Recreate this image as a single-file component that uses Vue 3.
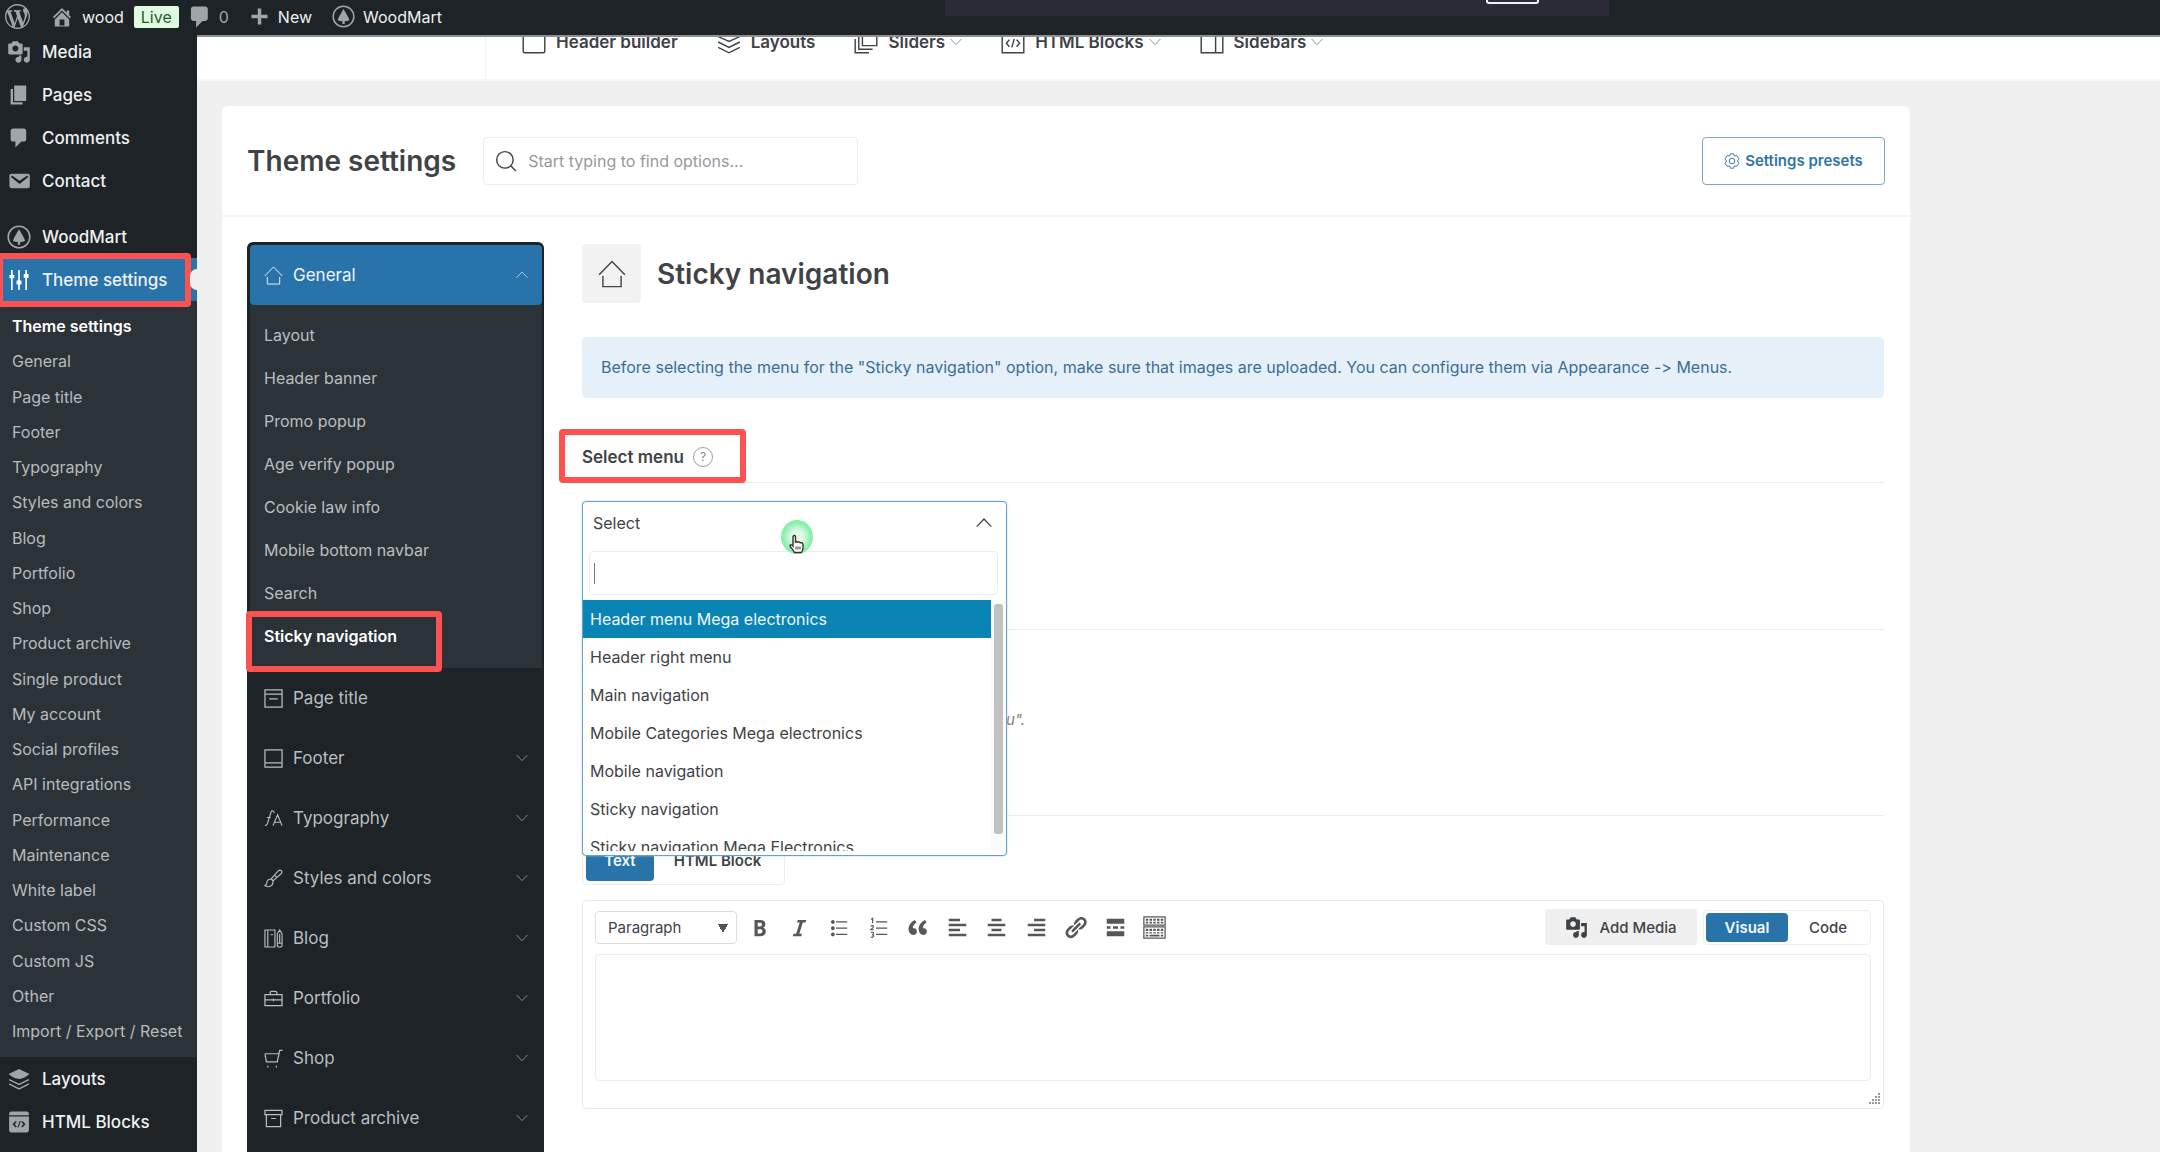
<script setup>
import { h, ref } from 'vue'

const glyphs = {
  wordpress: { d: 'M20 10c0-5.51-4.49-10-10-10C4.48 0 0 4.49 0 10c0 5.52 4.48 10 10 10 5.51 0 10-4.48 10-10zM7.78 15.37L4.37 6.22c.55-.02 1.17-.08 1.17-.08.5-.06.44-1.13-.06-1.11 0 0-1.45.11-2.37.11-.18 0-.37 0-.58-.01C4.12 2.69 6.87 1.11 10 1.11c2.33 0 4.45.87 6.05 2.34-.68-.11-1.65.39-1.65 1.58 0 .74.45 1.36.9 2.1.35.61.55 1.36.55 2.46 0 1.49-1.4 5-1.4 5l-3.03-8.37c.54-.02.82-.17.82-.17.5-.05.44-1.25-.06-1.22 0 0-1.44.12-2.38.12-.87 0-2.33-.12-2.33-.12-.5-.03-.56 1.2-.06 1.22l.92.08 1.26 3.41zM17.41 10c.24-.64.74-1.87.43-4.25.7 1.29 1.05 2.71 1.05 4.25 0 3.29-1.73 6.24-4.4 7.78.97-2.59 1.94-5.2 2.92-7.78zM6.1 18.09C3.12 16.65 1.11 13.53 1.11 10c0-1.3.23-2.48.72-3.59C3.25 10.3 4.67 14.2 6.1 18.09zm4.03-6.63l2.58 6.98c-.86.29-1.76.45-2.71.45-.79 0-1.57-.11-2.29-.33.81-2.38 1.62-4.74 2.42-7.1z' },
  site: { d: 'M16 8.5l1.53 1.53-1.06 1.06L10 4.6l-6.47 6.49-1.06-1.06L10 2.5l4 4v-2h2v4zm-6-2.46l6 5.99V18H4v-5.97zM12 17v-5H8v5h4z' },
  comment: { d: 'M5 2h9c1.1 0 2 .9 2 2v7c0 1.1-.9 2-2 2h-2l-5 5v-5H5c-1.1 0-2-.9-2-2V4c0-1.1.9-2 2-2z' },
  plus: { d: 'M17 8.5v3h-5.5V17h-3v-5.5H3v-3h5.500V3h3v5.500z' },
  media: { d: 'M13 11V4c0-.55-.45-1-1-1h-1.67L9 1H5L3.67 3H2c-.55 0-1 .45-1 1v7c0 .55.45 1 1 1h10c.55 0 1-.45 1-1zM7 4.500c1.380 0 2.500 1.120 2.500 2.500S8.380 9.500 7 9.500 4.500 8.380 4.500 7 5.620 4.500 7 4.500zM14 6h5v10.500c0 1.380-1.120 2.500-2.500 2.500S14 17.880 14 16.500s1.120-2.500 2.500-2.500c.17 0 .34.02.5.05V9h-3V6zm-4 8.050V13h2v3.500c0 1.380-1.120 2.500-2.500 2.500S7 17.880 7 16.500 8.120 14 9.500 14c.17 0 .34.02.5.05z' },
  page: { d: 'M6 15V2h10v13H6zm-1 1h8v2H3V5h2v11z' },
  mail: { d: 'M3.870 4h13.250C18.370 4 19 4.590 19 5.790v8.420c0 1.190-.63 1.790-1.880 1.790H3.870c-1.250 0-1.880-.6-1.880-1.790V5.790c0-1.200.63-1.790 1.880-1.790zm6.620 8.600l6.740-5.530c.24-.2.43-.66.13-1.070-.29-.41-.82-.42-1.170-.17l-5.700 3.860L4.800 5.830c-.35-.25-.88-.24-1.170.17-.3.41-.11.87.13 1.070z' },
  wood: { s: 1.3, d: 'M10 1a9 9 0 1 0 0 18a9 9 0 1 0 0-18', f: 'M10 3.500L13.500 9.500Q15 12 15 13.300Q12.500 14.300 11 14V16.500H9V14Q7.500 14.300 5 13.300Q5 12 6.500 9.500Z' },
  sliders: { s: 1.500, d: 'M3.500 1V19M10 1V19M16.500 1V19', f: 'M1.300 5.500h4.400v3h-4.400zM7.800 10.500h4.400v3.500h-4.400zM14.300 4.500h4.400v3.500h-4.400z' },
  layersFill: { s: 1.300, d: 'M1 10.500L10 15L19 10.500M1 14.500L10 19L19 14.500', f: 'M10 1L19.500 5.500Q15 9.500 10 10Q5 9.500 .5 5.500Z' },
  htmlFill: { f: 'M1 3Q1 0.500 3 .5H17Q19 .5 19 3V3.800H1ZM1 5H19V17Q19 19.500 17 19.500H3Q1 19.500 1 17ZM7 9L4 12L7 15L8 14L6 12L8 10ZM13 9L12 10L14 12L12 14L13 15L16 12ZM10.600 9L8.600 15H9.600L11.600 9Z' },
  home: { s: 1, d: 'M.8 10.500L10 1L19.200 10.500M3.500 11.500V19H16.500V11.500' },
  window: { s: 1.200, d: 'M2.500 1H17.500Q19 1 19 2.500V17.500Q19 19 17.500 19H2.500Q1 19 1 17.500V2.500Q1 1 2.500 1ZM1 5H19' },
  layers: { s: 1.200, d: 'M10 1L19 5.500L10 9.500L1 5.500ZM1 10L10 14.500L19 10M1 14.500L10 19L19 14.500' },
  slides: { s: 1.200, d: 'M7 1H19V13H7ZM4 4.500V16H15.500M1 7.500V19H12.500' },
  html: { s: 1.200, d: 'M1 1H19V19H1ZM1 4H19M7 8L4.500 11L7 14M13 8L15.500 11L13 14M11 7.500L9 14.500' },
  sidebar: { s: 1.200, d: 'M1 1H19V19H1ZM13 1V19' },
  search: { s: 1.300, d: 'M9 1.500a7.500 7.500 0 1 0 0 15a7.500 7.500 0 1 0 0-15M14.500 14.500L19 19' },
  gear: { s: 1.200, d: 'M8 1H12L13 3.800L16 3.300L18.500 7L17 10L18.500 13L16 16.700L13 16.200L12 19H8L7 16.200L4 16.700L1.500 13L3 10L1.500 7L4 3.300L7 3.800ZM10 6.500a3.500 3.500 0 1 0 0 7a3.500 3.500 0 1 0 0-7' },
  titlebar: { s: 1.300, d: 'M1 1H19V19H1ZM1 5.500H19M5.500 10.500H14.500' },
  footer: { s: 1.300, d: 'M1 1H19V19H1ZM1 14.500H19' },
  typo: { s: 1.200, d: 'M1 17Q3 18 4 14L7.500 3Q8 1.500 9.500 2L11 4M3 9H7M9.500 17.500L14.300 6L19 17.500M11 14H17.500' },
  brush: { s: 1.200, d: 'M7.500 10.500L15 2Q17 .5 18.500 2Q19.500 3.500 18 5L9.500 12.500M7.500 10.500Q9.500 11 9.500 13Q10 16 7 18Q4 19.500 1 17.500Q3 16.500 3 14Q3.500 10.500 7.500 10.500M7.500 10.500L9.500 12.500M11 6.500L13.500 9' },
  blog: { s: 1.200, d: 'M1 1H11.500V19H1ZM4 1V19M7 6H9.500M14 5L16.500 1L19 5V17Q19 19 16.500 19Q14 19 14 17ZM14 15H19M16.500 5V15' },
  case: { s: 1.300, d: 'M1 6H19V17.500H1ZM6.500 6V4Q6.500 2.500 8 2.500H12Q13.500 2.500 13.500 4V6M1 11.500H19M10 10V13' },
  cart: { s: 1.300, d: 'M1 5L2.500 13.500H14L16.500 1.500H19.500M1 5H15.500M4 17.500V19.500M13 17.500V19.500' },
  archive: { s: 1.300, d: 'M1 1.500H19V6H1ZM2.500 6V18.500H17.500V6M7.500 10H12.500' },
  down: { s: 1.600, d: 'M1 5L10 14.500L19 5' },
  up: { s: 1.600, d: 'M1 14.500L10 5L19 14.500' },
  bold: { d: 'M6 4v13h4.540c1.370 0 2.460-.33 3.260-1 .8-.66 1.200-1.580 1.200-2.770 0-.84-.17-1.510-.51-2.010s-.9-.85-1.670-1.030v-.09c.57-.1 1.020-.4 1.360-.9s.51-1.130.51-1.910c0-1.140-.39-1.980-1.170-2.500C12.750 4.260 11.500 4 9.780 4H6zm2.570 5.150V6.260h1.360c.73 0 1.270.11 1.610.32.34.22.51.58.51 1.070 0 .54-.16.92-.47 1.150s-.82.35-1.510.35h-1.500zm0 2.190h1.600c1.440 0 2.160.53 2.160 1.610 0 .6-.17 1.050-.51 1.340s-.86.43-1.570.43H8.570v-3.380z' },
  italic: { d: 'M14.780 6h-2.130l-2.800 9h2.120l-.62 2H4.600l.62-2h2.140l2.800-9H8.030l.62-2h6.750z' },
  bullets: { d: 'M5.500 7C4.670 7 4 6.330 4 5.500 4 4.680 4.670 4 5.500 4 6.320 4 7 4.680 7 5.500 7 6.330 6.320 7 5.500 7zM8 5h9v1H8V5zm-2.500 7c-.83 0-1.500-.67-1.500-1.500C4 9.680 4.670 9 5.500 9c.82 0 1.500.68 1.500 1.500 0 .83-.68 1.500-1.500 1.500zM8 10h9v1H8v-1zm-2.500 7c-.83 0-1.500-.67-1.500-1.500 0-.82.67-1.500 1.500-1.500.82 0 1.500.68 1.500 1.500 0 .83-.68 1.500-1.500 1.500zM8 15h9v1H8v-1z' },
  numbers: { s: 0.900, d: 'M4 3.500L5.300 2.700V6.500M3.800 9Q5 8 6 9Q6 10 3.900 11.800H6.300M3.800 14Q6 13.300 6 14.800Q6 15.600 4.800 15.700Q6.200 15.800 6.200 17Q5.500 18.300 3.700 17.600', f: 'M8 5h9v1H8zM8 10h9v1H8zM8 15h9v1H8z' },
  quote: { d: 'M9.490 13.220c0-.74-.2-1.380-.61-1.900-.62-.78-1.830-.88-2.530-.72-.29-1.650 1.110-3.750 2.920-4.650L7.880 4c-2.730 1.300-5.420 4.280-4.960 8.050C3.210 14.430 4.590 16 6.540 16c.85 0 1.560-.25 2.120-.75s.83-1.180.83-2.030zm8.050 0c0-.74-.2-1.380-.61-1.900-.63-.78-1.830-.88-2.530-.72-.29-1.650 1.110-3.750 2.920-4.650L15.930 4c-2.730 1.300-5.410 4.280-4.950 8.050.29 2.380 1.660 3.950 3.610 3.950.85 0 1.560-.25 2.120-.75s.83-1.180.83-2.030z' },
  alignLeft: { d: 'M12 5V3H3v2h9zm5 4V7H3v2h14zm-5 4v-2H3v2h9zm5 4v-2H3v2h14z' },
  alignCenter: { d: 'M14 5V3H6v2h8zm3 4V7H3v2h14zm-3 4v-2H6v2h8zm3 4v-2H3v2h14z' },
  alignRight: { d: 'M17 5V3H8v2h9zm0 4V7H3v2h14zm0 4v-2H8v2h9zm0 4v-2H3v2h14z' },
  link: { d: 'M17.740 2.760c1.680 1.690 1.680 4.410 0 6.100l-1.530 1.520c-1.120 1.120-2.700 1.470-4.140 1.090l2.620-2.610.76-.77.76-.76c.84-.84.84-2.200 0-3.040-.84-.85-2.200-.85-3.040 0l-.77.76-3.380 3.380c-.37-1.440-.02-3.020 1.100-4.140l1.520-1.530c1.690-1.680 4.420-1.680 6.100 0zM8.590 13.430l5.340-5.340c.42-.42.42-1.100 0-1.520-.44-.43-1.130-.39-1.530 0l-5.330 5.340c-.42.42-.42 1.100 0 1.520.44.43 1.130.39 1.520 0zm-.76 2.290l4.140-4.150c.38 1.440.03 3.020-1.090 4.140l-1.520 1.530c-1.690 1.680-4.410 1.680-6.100 0-1.680-1.680-1.680-4.420 0-6.100l1.530-1.520c1.120-1.120 2.700-1.470 4.140-1.100l-4.140 4.150c-.85.84-.85 2.200 0 3.050.84.84 2.200.84 3.040 0z' },
  more: { d: 'M17 7V3H3v4h14zM6 11V9H3v2h3zm6 0V9H8v2h4zm5 0V9h-3v2h3zm0 6v-4H3v4h14z' },
  kitchen: { s: 1, d: 'M1.500 1.500H18.500V8H1.500ZM1.500 9.500H18.500V18.500H1.500Z', f: 'M3 3h2v1.500H3zM6 3h2v1.500H6zM9 3h2v1.500H9zM12 3h2v1.500h-2zM15 3h2v1.500h-2zM3 5.300h2v1.400H3zM6 5.300h2v1.400H6zM9 5.300h2v1.400H9zM12 5.300h2v1.400h-2zM15 5.300h2v1.400h-2zM3 11h2v1.800H3zM6 11h2v1.800H6zM9 11h2v1.800H9zM12 11h2v1.800h-2zM15 11h2v1.800h-2zM3 13.800h2v1H3zM6 13.800h2v1H6zM9 13.800h2v1H9zM12 13.800h2v1h-2zM15 13.800h2v1h-2zM3 15.700h2v1.500H3zM6 15.700h8v1.500H6zM15 15.700h2v1.500h-2z' },
}

function Icon(props) {
  const g = glyphs[props.name]
  return h('svg', { viewBox: '0 0 20 20', width: props.size, height: props.size, 'aria-hidden': 'true' }, [
    g.d && h('path', g.s
      ? { d: g.d, fill: 'none', stroke: 'currentColor', 'stroke-width': g.s }
      : { d: g.d, fill: 'currentColor', 'fill-rule': 'nonzero' }),
    g.f && h('path', { d: g.f, fill: 'currentColor', 'fill-rule': 'evenodd' }),
  ])
}
Icon.props = ['name', 'size']

const adminTop = [
  { label: 'Media', icon: 'media' },
  { label: 'Pages', icon: 'page' },
  { label: 'Comments', icon: 'comment' },
  { label: 'Contact', icon: 'mail' },
]
const adminSub = [
  'Theme settings', 'General', 'Page title', 'Footer', 'Typography', 'Styles and colors', 'Blog',
  'Portfolio', 'Shop', 'Product archive', 'Single product', 'My account', 'Social profiles',
  'API integrations', 'Performance', 'Maintenance', 'White label', 'Custom CSS', 'Custom JS',
  'Other', 'Import / Export / Reset',
]
const topLinks = [
  { label: 'Header builder', icon: 'window' },
  { label: 'Layouts', icon: 'layers' },
  { label: 'Sliders', icon: 'slides', more: true },
  { label: 'HTML Blocks', icon: 'html', more: true },
  { label: 'Sidebars', icon: 'sidebar', more: true },
]
const generalItems = [
  'Layout', 'Header banner', 'Promo popup', 'Age verify popup', 'Cookie law info',
  'Mobile bottom navbar', 'Search', 'Sticky navigation',
]
const sections = [
  { label: 'Page title', icon: 'titlebar' },
  { label: 'Footer', icon: 'footer', more: true },
  { label: 'Typography', icon: 'typo', more: true },
  { label: 'Styles and colors', icon: 'brush', more: true },
  { label: 'Blog', icon: 'blog', more: true },
  { label: 'Portfolio', icon: 'case', more: true },
  { label: 'Shop', icon: 'cart', more: true },
  { label: 'Product archive', icon: 'archive', more: true },
]
const menus = [
  'Header menu Mega electronics', 'Header right menu', 'Main navigation',
  'Mobile Categories Mega electronics', 'Mobile navigation', 'Sticky navigation',
  'Sticky navigation Mega Electronics',
]
const tools = [
  ['bold', 'Bold'], ['italic', 'Italic'], ['bullets', 'Bulleted list'], ['numbers', 'Numbered list'],
  ['quote', 'Blockquote'], ['alignLeft', 'Align left'], ['alignCenter', 'Align center'],
  ['alignRight', 'Align right'], ['link', 'Insert link'], ['more', 'Read more'], ['kitchen', 'Toolbar toggle'],
]
const highlighted = ref(0)
const filter = ref('')
const body = ref('')
</script>

<template>
  <div class="app">
    <header class="adminbar">
      <a href="#" class="bar-logo" aria-label="WordPress"><Icon name="wordpress" size="25" /></a>
      <a href="#" class="bar-site"><Icon name="site" size="24" />wood</a>
      <span class="live">Live</span>
      <a href="#" class="bar-comments"><Icon name="comment" size="26" />0</a>
      <a href="#" class="bar-new"><Icon name="plus" size="23" />New</a>
      <a href="#" class="bar-wood"><Icon name="wood" size="23" />WoodMart</a>
      <div class="share-strip"><span class="share-box"></span></div>
    </header>

    <div class="columns">
      <aside class="sidebar">
        <a v-for="i in adminTop" :key="i.label" href="#" class="side-item"><Icon :name="i.icon" size="24" />{{ i.label }}</a>
        <a href="#" class="side-item spaced"><Icon name="wood" size="24" />WoodMart</a>
        <a href="#" class="side-item current"><Icon name="sliders" size="22" />Theme settings<span class="mark mark-side"></span></a>
        <ul class="side-sub">
          <li v-for="(s, n) in adminSub" :key="s"><a href="#" :class="{ on: n === 0 }">{{ s }}</a></li>
        </ul>
        <a href="#" class="side-item"><Icon name="layersFill" size="22" />Layouts</a>
        <a href="#" class="side-item"><Icon name="htmlFill" size="22" />HTML Blocks</a>
      </aside>

      <main class="main">
        <nav class="topnav">
          <a v-for="t in topLinks" :key="t.label" href="#"><Icon :name="t.icon" size="24" />{{ t.label }}<Icon v-if="t.more" name="down" size="12" class="chev" /></a>
        </nav>

        <section class="panel">
          <header class="panel-head">
            <h1>Theme settings</h1>
            <label class="finder">
              <Icon name="search" size="22" />
              <input type="text" placeholder="Start typing to find options..." aria-label="Find options" />
            </label>
            <button type="button" class="presets"><Icon name="gear" size="16" />Settings presets</button>
          </header>

          <div class="panel-body">
            <nav class="tree">
              <button type="button" class="tree-item open"><Icon name="home" size="19" />General<Icon name="up" size="12" class="end" /></button>
              <ul class="tree-sub">
                <li v-for="g in generalItems" :key="g" :class="{ on: g === 'Sticky navigation' }">
                  <a href="#">{{ g }}</a><span v-if="g === 'Sticky navigation'" class="mark mark-tree"></span>
                </li>
              </ul>
              <button v-for="s in sections" :key="s.label" type="button" class="tree-item"><Icon :name="s.icon" size="19" />{{ s.label }}<Icon v-if="s.more" name="down" size="12" class="end" /></button>
            </nav>

            <div class="content">
              <div class="title-row">
                <span class="title-icon"><Icon name="home" size="28" /></span>
                <h2>Sticky navigation</h2>
              </div>
              <p class="notice">Before selecting the menu for the "Sticky navigation" option, make sure that images are uploaded. You can configure them via Appearance -&gt; Menus.</p>

              <div class="field-head first">
                <label for="menu-select">Select menu</label>
                <span class="help">?</span>
                <span class="mark mark-label"></span>
              </div>
              <div class="picker">
                <div class="dropdown">
                  <button id="menu-select" type="button" class="picked" aria-expanded="true">Select<Icon name="up" size="16" /></button>
                  <div class="query"><input v-model="filter" type="text" aria-label="Search menus" /><span class="caret"></span></div>
                  <div class="options">
                    <ul role="listbox">
                      <li v-for="(m, n) in menus" :key="m" role="option" :class="{ hot: n === highlighted }" @mouseenter="highlighted = n">{{ m }}</li>
                    </ul>
                    <span class="track"><span class="thumb"></span></span>
                  </div>
                  <span class="pointer">
                    <svg viewBox="0 0 18 20" width="18" height="20" aria-hidden="true"><path d="M5 11V3Q5 1.500 6.300 1.500Q7.500 1.500 7.500 3V8Q8.500 7 9.800 8.300Q11 7.300 12.300 8.800Q14 8 15 10V14Q15 16 13.500 18.500H6.500Q5 15.500 2.500 13Q1.500 11.500 2.500 11Q3.800 10.500 5 12Z" fill="#fff" stroke="#3a2f33" stroke-width="1.400" /><path d="M8 12.500V15.500M10 12.500V15.500M12 12.500V15.500" stroke="#3a2f33" /></svg>
                  </span>
                </div>
              </div>

              <div class="field-head"></div>
              <p class="hint">u".</p>

              <div class="field-head"></div>
              <div class="kind">
                <button type="button" class="on">Text</button>
                <button type="button">HTML Block</button>
              </div>

              <div class="editor">
                <div class="toolbar">
                  <select aria-label="Block format"><option>Paragraph</option></select>
                  <div class="tools">
                    <button v-for="t in tools" :key="t[0]" type="button" :aria-label="t[1]"><Icon :name="t[0]" size="25" /></button>
                  </div>
                  <button type="button" class="add-media"><Icon name="media" size="23" />Add Media</button>
                  <div class="mode">
                    <button type="button" class="on">Visual</button>
                    <button type="button">Code</button>
                  </div>
                </div>
                <textarea v-model="body" aria-label="Content"></textarea>
                <svg class="grip" viewBox="0 0 12 12" width="12" height="12" aria-hidden="true"><path d="M10 0h2v2h-2zM7 3h2v2h-2zM10 3h2v2h-2zM4 6h2v2H4zM7 6h2v2H7zM10 6h2v2h-2zM1 9h2v2H1zM4 9h2v2H4zM7 9h2v2H7zM10 9h2v2h-2z" fill="#999" /></svg>
              </div>
            </div>
          </div>
        </section>
      </main>
    </div>
  </div>
</template>

<style>
body {
  background: #f0f0f0;
}
</style>

<style scoped>
* {
  box-sizing: border-box;
}
.app {
  display: flex;
  flex-direction: column;
  min-height: 100vh;
  font-family: Inter, "Liberation Sans", sans-serif;
  font-feature-settings: "calt" 0;
  font-size: 16px;
  color: #3f4347;
}
a {
  color: inherit;
  text-decoration: none;
}
button,
input,
select,
textarea {
  font: inherit;
  color: inherit;
  margin: 0;
}
button {
  border: 0;
  background: none;
  cursor: pointer;
}
ul {
  list-style: none;
  margin: 0;
  padding: 0;
}
h1,
h2 {
  margin: 0;
  font-size: 28px;
  font-weight: 600;
  line-height: 34px;
}
svg {
  flex: none;
}
.mark {
  position: absolute;
  border: 6px solid #fd5252;
  border-radius: 4px;
  pointer-events: none;
}

/* admin bar */
.adminbar {
  position: relative;
  z-index: 2;
  display: flex;
  align-items: center;
  height: 37px;
  padding: 0 5px 2px;
  background: #1d2327;
  border-bottom: 2px solid #8d9092;
  color: #f0f0f1;
  font-size: 16px;
}
.adminbar a {
  display: flex;
  align-items: center;
}
.adminbar svg {
  color: #a0a5aa;
}
.bar-site {
  margin-left: 20px;
  gap: 8px;
}
.live {
  margin-left: 10px;
  padding: 0 7px;
  border-radius: 2px;
  background: #e1fbe3;
  color: #1b5e2c;
  line-height: 22px;
}
.bar-comments {
  margin-left: 8px;
  gap: 6px;
}
.adminbar .bar-comments {
  color: #a0a5aa;
}
.bar-new {
  margin-left: 19px;
  gap: 7px;
}
.bar-wood {
  margin-left: 20px;
  gap: 8px;
}
.share-strip {
  position: absolute;
  top: 0;
  left: 43.75%;
  width: 30.75%;
  height: 16px;
  overflow: hidden;
  background: #2a2b35;
}
.share-box {
  position: absolute;
  top: -20px;
  right: 70px;
  width: 53px;
  height: 24px;
  border: 2px solid #f4f4f4;
  border-radius: 3px;
}

/* left menu */
.columns {
  display: flex;
  flex: 1;
}
.sidebar {
  position: relative;
  z-index: 3;
  flex: none;
  width: 197px;
  margin-top: -7px;
  background: #1d2327;
  color: #f0f0f1;
}
.side-item {
  position: relative;
  display: flex;
  align-items: center;
  gap: 11px;
  height: 43px;
  padding-left: 7px;
  font-size: 17px;
  font-weight: 500;
  white-space: nowrap;
}
.side-item svg {
  width: 24px;
  color: #a0a5aa;
}
.spaced {
  margin-top: 13px;
}
.current {
  background: #2874aa;
}
.current svg {
  color: #fff;
}
.current::after {
  content: "";
  position: absolute;
  right: 0;
  top: 11px;
  width: 7px;
  height: 21px;
  background: #f0f0f0;
  border-radius: 7px 0 0 7px;
}
.mark-side {
  left: -3px;
  top: -5px;
  width: 194px;
  height: 54px;
}
.side-sub {
  display: flex;
  flex-direction: column;
  justify-content: space-between;
  min-height: 756px;
  padding: 8px 0 8px 12px;
  background: #2c3338;
  color: #b7bbbe;
  line-height: 35px;
  white-space: nowrap;
}
.side-sub a {
  display: block;
}
.side-sub .on {
  color: #fff;
  font-weight: 600;
}

/* main column */
.main {
  display: flex;
  flex-direction: column;
  flex: 1;
  min-width: 0;
}
.topnav {
  display: flex;
  align-items: center;
  gap: 39px;
  height: 76px;
  margin-top: -32px;
  padding-left: 325px;
  background: linear-gradient(#f3f3f3, #f3f3f3) 288px 0 / 1px 100% no-repeat #fff;
  border-bottom: 2px solid #f7f7f7;
  font-size: 17px;
  font-weight: 600;
}
.topnav a {
  display: flex;
  align-items: center;
  gap: 10px;
}
.topnav .chev {
  margin-left: -5px;
  color: #8c8f92;
}
.panel {
  display: flex;
  flex-direction: column;
  flex: 1;
  max-width: 1688px;
  margin: 25px 26px 0 25px;
  background: #fff;
  border-radius: 6px 6px 0 0;
}
.panel-head {
  display: flex;
  align-items: center;
  height: 111px;
  padding: 0 25px;
  border-bottom: 2px solid #f5f5f5;
}
.finder {
  display: flex;
  align-items: center;
  gap: 11px;
  width: 375px;
  height: 48px;
  margin-left: 27px;
  padding: 0 11px;
  border: 1px solid #ededed;
  border-radius: 4px;
}
.finder input {
  flex: 1;
  min-width: 0;
  border: 0;
  padding: 0;
  background: none;
  outline: 0;
}
.finder input::placeholder {
  color: #96999c;
  opacity: 1;
}
.presets {
  display: flex;
  align-items: center;
  justify-content: center;
  gap: 5px;
  height: 48px;
  width: 183px;
  margin-left: auto;
  padding: 0;
  border: 1px solid #7ba9c2;
  border-radius: 4px;
  color: #2f75a3;
  font-size: 15px;
  font-weight: 600;
}
.panel-body {
  display: flex;
  flex: 1;
  align-items: stretch;
  gap: 38px;
  padding: 25px 26px 0 25px;
}

/* settings tree */
.tree {
  flex: none;
  width: 297px;
  padding: 3px 2px 0 3px;
  border-radius: 6px 6px 0 0;
  background: #1d2327;
  color: #bbbec1;
}
.tree-item {
  display: flex;
  align-items: center;
  gap: 10px;
  width: 100%;
  height: 60px;
  padding: 0 14px;
  font-size: 17px;
}
.tree-item .end {
  margin-left: auto;
  opacity: 0.7;
}
.open {
  border-radius: 4px;
  background: #2874aa;
  color: #f0f4f8;
}
.tree-sub {
  padding: 9px 0 10px;
  background: #2c3338;
}
.tree-sub li {
  position: relative;
  padding-left: 14px;
  line-height: 43px;
}
.tree-sub .on {
  color: #fff;
  font-weight: 600;
}
.mark-tree {
  left: -4px;
  top: -4px;
  width: 196px;
  height: 61px;
}

/* content */
.content {
  flex: 1;
  min-width: 0;
  padding-top: 2px;
}
.title-row {
  display: flex;
  align-items: center;
  gap: 16px;
}
.title-icon {
  display: flex;
  align-items: center;
  justify-content: center;
  width: 59px;
  height: 59px;
  border-radius: 4px;
  background: #f2f2f2;
}
.notice {
  margin: 34px 0;
  padding: 0 19px;
  border-radius: 5px;
  background: #e5f0f9;
  color: #3c6e96;
  line-height: 61px;
}
.field-head {
  position: relative;
  display: flex;
  align-items: center;
  gap: 9px;
  height: 51px;
  border-bottom: 1px solid #ececec;
  font-size: 17px;
  font-weight: 600;
}
.help {
  width: 20px;
  height: 20px;
  border: 1px solid #9a9da0;
  border-radius: 50%;
  color: #85888b;
  font-size: 12px;
  font-weight: 400;
  line-height: 18px;
  text-align: center;
}
.mark-label {
  left: -23px;
  top: -3px;
  width: 187px;
  height: 54px;
}
.picker {
  position: relative;
  height: 96px;
}
.dropdown {
  position: absolute;
  z-index: 1;
  top: 18px;
  left: 0;
  width: 425px;
  border: 1px solid #6aa3bf;
  border-radius: 4px;
  background: #fff;
  box-shadow: 0 0 2px #9cc9e4;
}
.picked {
  display: flex;
  align-items: center;
  justify-content: space-between;
  width: 100%;
  height: 41px;
  padding: 0 14px 0 10px;
}
.query {
  position: relative;
  margin: 8px 8px 5px 6px;
}
.query input {
  display: block;
  width: 100%;
  height: 44px;
  border: 1px solid #ececec;
  border-radius: 4px;
  outline: 0;
}
.caret {
  position: absolute;
  left: 5px;
  top: 12px;
  width: 1px;
  height: 21px;
  background: #777;
}
.options {
  display: flex;
  height: 251px;
  margin-bottom: 4px;
}
.options ul {
  flex: 1;
  overflow: hidden;
}
.options li {
  padding-left: 7px;
  line-height: 38px;
}
.options .hot {
  background: #0a84b5;
  color: #eef7fb;
}
.track {
  width: 15px;
  padding: 4px 3px;
  background: #fafafa;
}
.thumb {
  display: block;
  width: 9px;
  height: 230px;
  border-radius: 3px;
  background: #c1c1c1;
}
.pointer {
  position: absolute;
  left: 198px;
  top: 18px;
  display: flex;
  align-items: flex-end;
  justify-content: center;
  width: 32px;
  height: 34px;
  border-radius: 50%;
  background: radial-gradient(#e0fae8 25%, #8df0af 60%, #6feb9b);
}
.hint {
  display: flex;
  align-items: center;
  height: 135px;
  margin: 0;
  padding: 44px 0 0 424px;
  color: #777a7d;
  font-size: 15px;
  font-style: italic;
}
.kind {
  display: flex;
  width: 203px;
  height: 49px;
  margin: 20px 0 15px;
  padding: 3px;
  border: 1px solid #ededed;
  border-radius: 4px;
}
.kind button {
  flex: 1;
  padding: 0;
  border-radius: 4px;
  font-size: 15px;
  font-weight: 600;
  white-space: nowrap;
}
.kind .on,
.mode .on {
  flex: none;
  background: #2874aa;
  color: #f4f9fd;
}
.kind .on {
  width: 68px;
}
.editor {
  position: relative;
  height: 209px;
  padding: 8px 12px;
  border: 1px solid #ebebeb;
  border-radius: 4px;
}
.toolbar {
  display: flex;
  align-items: center;
  height: 36px;
}
.toolbar select {
  appearance: none;
  width: 142px;
  height: 33px;
  padding: 0 12px;
  border: 1px solid #dedede;
  border-radius: 4px;
  outline: 0;
  background:
    linear-gradient(to bottom right, #555 50%, transparent 51%) 127px 12px / 5px 9px no-repeat,
    linear-gradient(to bottom left, #555 50%, transparent 51%) 122px 12px / 5px 9px no-repeat,
    #fff;
  font-size: 15px;
}
.tools {
  display: flex;
  justify-content: space-between;
  width: 430px;
  margin-left: 5px;
}
.tools button {
  display: flex;
  align-items: center;
  justify-content: center;
  width: 35px;
  height: 34px;
  padding: 0;
  color: #55585b;
}
.add-media {
  display: flex;
  align-items: center;
  justify-content: center;
  gap: 11px;
  width: 152px;
  height: 36px;
  margin-left: auto;
  padding: 0;
  border-radius: 3px;
  background: #efefef;
  font-size: 15px;
  font-weight: 500;
}
.mode {
  display: flex;
  width: 168px;
  height: 35px;
  margin-left: 6px;
  padding: 2px;
  border: 1px solid #f0f0f0;
  border-radius: 4px;
}
.mode button {
  flex: 1;
  padding: 0;
  border-radius: 4px;
  font-size: 15px;
  font-weight: 500;
}
.mode .on {
  width: 82px;
  font-weight: 600;
}
textarea {
  display: block;
  width: 100%;
  height: 127px;
  margin-top: 9px;
  border: 1px solid #ededed;
  border-radius: 4px;
  background: #fefefe;
  outline: 0;
  resize: none;
}
.grip {
  position: absolute;
  right: 3px;
  bottom: 3px;
}
</style>
